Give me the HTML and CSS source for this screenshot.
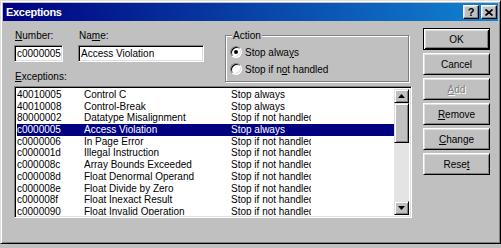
FILE: index.html
```html
<!DOCTYPE html>
<html>
<head>
<meta charset="utf-8">
<link rel="stylesheet" href="styles.css">
</head>
<body>
<div class="window">
  <div class="titlebar">
    <span class="title">Exceptions</span>
    <div class="title-btns">
      <span class="tbtn help">?</span>
      <span class="tbtn close"><svg width="8" height="7" viewBox="0 0 8 7"><path d="M0.5 0.5 L7.5 6.5 M7.5 0.5 L0.5 6.5" stroke="#000" stroke-width="1.7" fill="none"/></svg></span>
    </div>
  </div>
  <div class="client">
    <div class="left">
      <div class="top">
        <div class="fields">
          <div class="field-row">
            <div class="field num">
              <div class="label"><u>N</u>umber:</div>
              <div class="input">c0000005</div>
            </div>
            <div class="field name">
              <div class="label">Na<u>m</u>e:</div>
              <div class="input">Access Violation</div>
            </div>
          </div>
          <div class="label exc-label"><u>E</u>xceptions:</div>
        </div>
        <fieldset class="action">
          <legend>Action</legend>
          <div class="radio"><span class="rb checked"></span>Stop alwa<u>y</u>s</div>
          <div class="radio"><span class="rb"></span>Stop if n<u>o</u>t handled</div>
        </fieldset>
      </div>
      <div class="list">
        <div class="rows">
          <div class="row"><span class="c1">40010005</span><span class="c2">Control C</span><span class="c3">Stop always</span></div>
          <div class="row"><span class="c1">40010008</span><span class="c2">Control-Break</span><span class="c3">Stop always</span></div>
          <div class="row"><span class="c1">80000002</span><span class="c2">Datatype Misalignment</span><span class="c3">Stop if not handled</span></div>
          <div class="row sel"><span class="c1">c0000005</span><span class="c2">Access Violation</span><span class="c3">Stop always</span></div>
          <div class="row"><span class="c1">c0000006</span><span class="c2">In Page Error</span><span class="c3">Stop if not handled</span></div>
          <div class="row"><span class="c1">c000001d</span><span class="c2">Illegal Instruction</span><span class="c3">Stop if not handled</span></div>
          <div class="row"><span class="c1">c000008c</span><span class="c2">Array Bounds Exceeded</span><span class="c3">Stop if not handled</span></div>
          <div class="row"><span class="c1">c000008d</span><span class="c2">Float Denormal Operand</span><span class="c3">Stop if not handled</span></div>
          <div class="row"><span class="c1">c000008e</span><span class="c2">Float Divide by Zero</span><span class="c3">Stop if not handled</span></div>
          <div class="row"><span class="c1">c000008f</span><span class="c2">Float Inexact Result</span><span class="c3">Stop if not handled</span></div>
          <div class="row"><span class="c1">c0000090</span><span class="c2">Float Invalid Operation</span><span class="c3">Stop if not handled</span></div>
        </div>
        <div class="scrollbar">
          <div class="sbtn"><svg width="7" height="4" viewBox="0 0 7 4"><path d="M3.5 0 L7 4 L0 4 Z" fill="#000"/></svg></div>
          <div class="thumb"></div>
          <div class="track"></div>
          <div class="sbtn"><svg width="7" height="4" viewBox="0 0 7 4"><path d="M0 0 L7 0 L3.5 4 Z" fill="#000"/></svg></div>
        </div>
      </div>
    </div>
    <div class="buttons">
      <div class="btn default">OK</div>
      <div class="btn">Cancel</div>
      <div class="btn disabled"><u>A</u>dd</div>
      <div class="btn"><u>R</u>emove</div>
      <div class="btn"><u>C</u>hange</div>
      <div class="btn">Rese<u>t</u></div>
    </div>
  </div>
</div>
</body>
</html>
```
FILE: styles.css
```css
html, body {
  margin: 0;
  padding: 0;
  background: #c0c0c0;
}
body {
  font-family: "Liberation Sans", Arial, sans-serif;
  font-size: 10px;
  color: #000;
}
.window {
  width: 501px;
  height: 244px;
  box-sizing: border-box;
  border: 1px solid;
  border-color: #dfdfdf #000 #000 #dfdfdf;
  box-shadow: inset 1px 1px #fff, inset -1px -1px #808080;
  padding: 2px;
  background: #c0c0c0;
}
.titlebar {
  height: 18px;
  background: linear-gradient(90deg, #000080, #1084d0);
  display: flex;
  align-items: center;
  justify-content: space-between;
  padding-left: 3px;
}
.title {
  color: #fff;
  font-weight: bold;
  font-size: 11px;
  letter-spacing: -0.3px;
}
.title-btns {
  display: flex;
  gap: 2px;
  margin-right: 1px;
}
.tbtn {
  width: 16px;
  height: 14px;
  box-sizing: border-box;
  background: #c0c0c0;
  border: 1px solid;
  border-color: #fff #000 #000 #fff;
  box-shadow: inset -1px -1px #808080, inset 1px 1px #dfdfdf;
  display: flex;
  align-items: center;
  justify-content: center;
  font-weight: bold;
  font-size: 11px;
  line-height: 12px;
}
.client {
  display: flex;
  padding: 7px 7px 0 11px;
}
.left {
  width: 398px;
  display: flex;
  flex-direction: column;
}
.top {
  display: flex;
  height: 58px;
}
.fields {
  width: 190px;
  display: flex;
  flex-direction: column;
}
.field-row {
  display: flex;
  margin-top: 1px;
}
.label {
  height: 13px;
  line-height: 13px;
  padding-left: 1px;
}
.field.num {
  width: 49px;
}
.field.name {
  width: 126px;
  margin-left: 15px;
}
.input {
  margin-top: 3px;
  height: 17px;
  box-sizing: border-box;
  background: #fff;
  border: 1px solid;
  border-color: #808080 #fff #fff #808080;
  box-shadow: inset 1px 1px #000, inset -1px -1px #dfdfdf;
  line-height: 15px;
  padding-left: 2px;
  white-space: nowrap;
  overflow: hidden;
}
.exc-label {
  margin-top: 8px;
}
.action {
  margin: 1px 0 0 21px;
  width: 184px;
  height: 53px;
  box-sizing: border-box;
  border: 1px solid #808080;
  box-shadow: inset 1px 1px #fff, 1px 1px #fff;
  padding: 0 0 0 4px;
  min-width: 0;
}
.action legend {
  padding: 0 1px;
  margin-left: 2px;
  line-height: 13px;
  background: #c0c0c0;
}
.radio {
  display: flex;
  align-items: center;
  height: 16px;
  margin-top: 1px;
}
.radio:first-of-type {
  margin-top: 2px;
}
.rb {
  width: 12px;
  height: 12px;
  box-sizing: border-box;
  border-radius: 50%;
  border: 1px solid;
  border-color: #808080 #fff #fff #808080;
  box-shadow: inset 1px 1px #000, inset -1px -1px #dfdfdf;
  background: #fff;
  margin-right: 3px;
  position: relative;
}
.rb.checked::after {
  content: "";
  position: absolute;
  left: 3px;
  top: 3px;
  width: 4px;
  height: 4px;
  border-radius: 50%;
  background: #000;
}
.list {
  height: 132px;
  box-sizing: border-box;
  border: 1px solid;
  border-color: #808080 #fff #fff #808080;
  box-shadow: inset 1px 1px #000, inset -1px -1px #dfdfdf;
  padding: 2px;
  display: flex;
  background: #fff;
}
.rows {
  flex: 1;
  overflow: hidden;
}
.row {
  height: 11.7px;
  line-height: 11.7px;
  display: flex;
  white-space: nowrap;
}
.row.sel {
  background: #000080;
  color: #fff;
}
.c1 {
  width: 67px;
  overflow: hidden;
}
.c2 {
  width: 147px;
  overflow: hidden;
}
.c3 {
  width: 80px;
  overflow: hidden;
}
.scrollbar {
  width: 15px;
  display: flex;
  flex-direction: column;
  background: #e4e4e4;
}
.sbtn {
  height: 14px;
  box-sizing: border-box;
  background: #c0c0c0;
  border: 1px solid;
  border-color: #dfdfdf #000 #000 #dfdfdf;
  box-shadow: inset 1px 1px #fff, inset -1px -1px #808080;
  display: flex;
  align-items: center;
  justify-content: center;
}
.thumb {
  height: 40px;
  box-sizing: border-box;
  background: #c0c0c0;
  border: 1px solid;
  border-color: #dfdfdf #000 #000 #dfdfdf;
  box-shadow: inset 1px 1px #fff, inset -1px -1px #808080;
}
.track {
  flex: 1;
}
.buttons {
  margin-left: 11px;
  width: 67px;
  display: flex;
  flex-direction: column;
  gap: 3px;
}
.btn {
  height: 22px;
  box-sizing: border-box;
  border: 1px solid;
  border-color: #fff #000 #000 #fff;
  box-shadow: inset 1px 1px #dfdfdf, inset -1px -1px #808080;
  display: flex;
  align-items: center;
  justify-content: center;
  background: #c0c0c0;
}
.btn.default {
  border-color: #000;
  box-shadow: inset 1px 1px #fff, inset -1px -1px #000, inset 2px 2px #dfdfdf, inset -2px -2px #808080;
}
.btn.disabled {
  color: #808080;
  text-shadow: 1px 1px #fff;
}
```
